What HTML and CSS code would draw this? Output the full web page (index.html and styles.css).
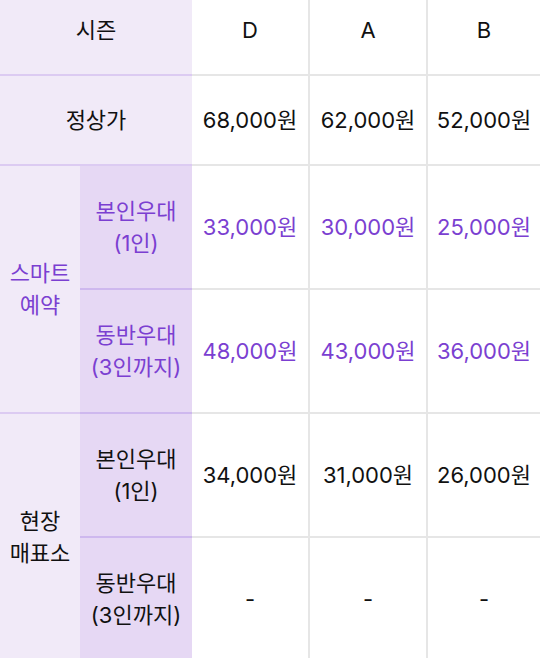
FILE: index.html
```html
<!DOCTYPE html>
<html lang="ko">
<head>
<meta charset="utf-8">
<title>요금표</title>
<link rel="stylesheet" href="styles.css">
</head>
<body>
<div class="price-table">
  <div class="cell head label-wide first-row">시즌</div>
  <div class="cell data first-row">D</div>
  <div class="cell data sep first-row">A</div>
  <div class="cell data sep first-row">B</div>

  <div class="cell label-wide">정상가</div>
  <div class="cell data">68,000원</div>
  <div class="cell data sep">62,000원</div>
  <div class="cell data sep">52,000원</div>

  <div class="cell group smart accent">스마트<br>예약</div>
  <div class="cell sub accent">본인우대<br>(1인)</div>
  <div class="cell data accent">33,000원</div>
  <div class="cell data sep accent">30,000원</div>
  <div class="cell data sep accent">25,000원</div>
  <div class="cell sub accent">동반우대<br>(3인까지)</div>
  <div class="cell data accent">48,000원</div>
  <div class="cell data sep accent">43,000원</div>
  <div class="cell data sep accent">36,000원</div>

  <div class="cell group onsite">현장<br>매표소</div>
  <div class="cell sub">본인우대<br>(1인)</div>
  <div class="cell data">34,000원</div>
  <div class="cell data sep">31,000원</div>
  <div class="cell data sep">26,000원</div>
  <div class="cell sub">동반우대<br>(3인까지)</div>
  <div class="cell data">-</div>
  <div class="cell data sep">-</div>
  <div class="cell data sep">-</div>
</div>
</body>
</html>
```

FILE: styles.css
```css
html, body {
  margin: 0;
  padding: 0;
  background: #ffffff;
}

body {
  font-family: "Inter", "Noto Sans CJK KR", sans-serif;
  font-size: 22px;
  color: #111111;
}

.price-table {
  display: grid;
  grid-template-columns: 80px 112px 116px 118px 114px;
  grid-template-rows: 76px 90px 124px 124px 124px 124px;
  width: 540px;
}

.cell {
  box-sizing: border-box;
  display: flex;
  align-items: center;
  justify-content: center;
  text-align: center;
  line-height: 32px;
  border-bottom: 2px solid #e6e6e6;
}

.first-row {
  padding-bottom: 14px;
}

.label-wide {
  grid-column: span 2;
  background: #f1eaf8;
  border-bottom-color: #dccbf2;
}

.data.sep {
  border-left: 2px solid #e6e6e6;
}

.group {
  grid-row: span 2;
  background: #f1eaf8;
  border-bottom-color: #dccbf2;
}

.sub {
  background: #e6d8f4;
  border-bottom-color: #ceb8ee;
}

.accent {
  color: #7b3fd1;
}
```
